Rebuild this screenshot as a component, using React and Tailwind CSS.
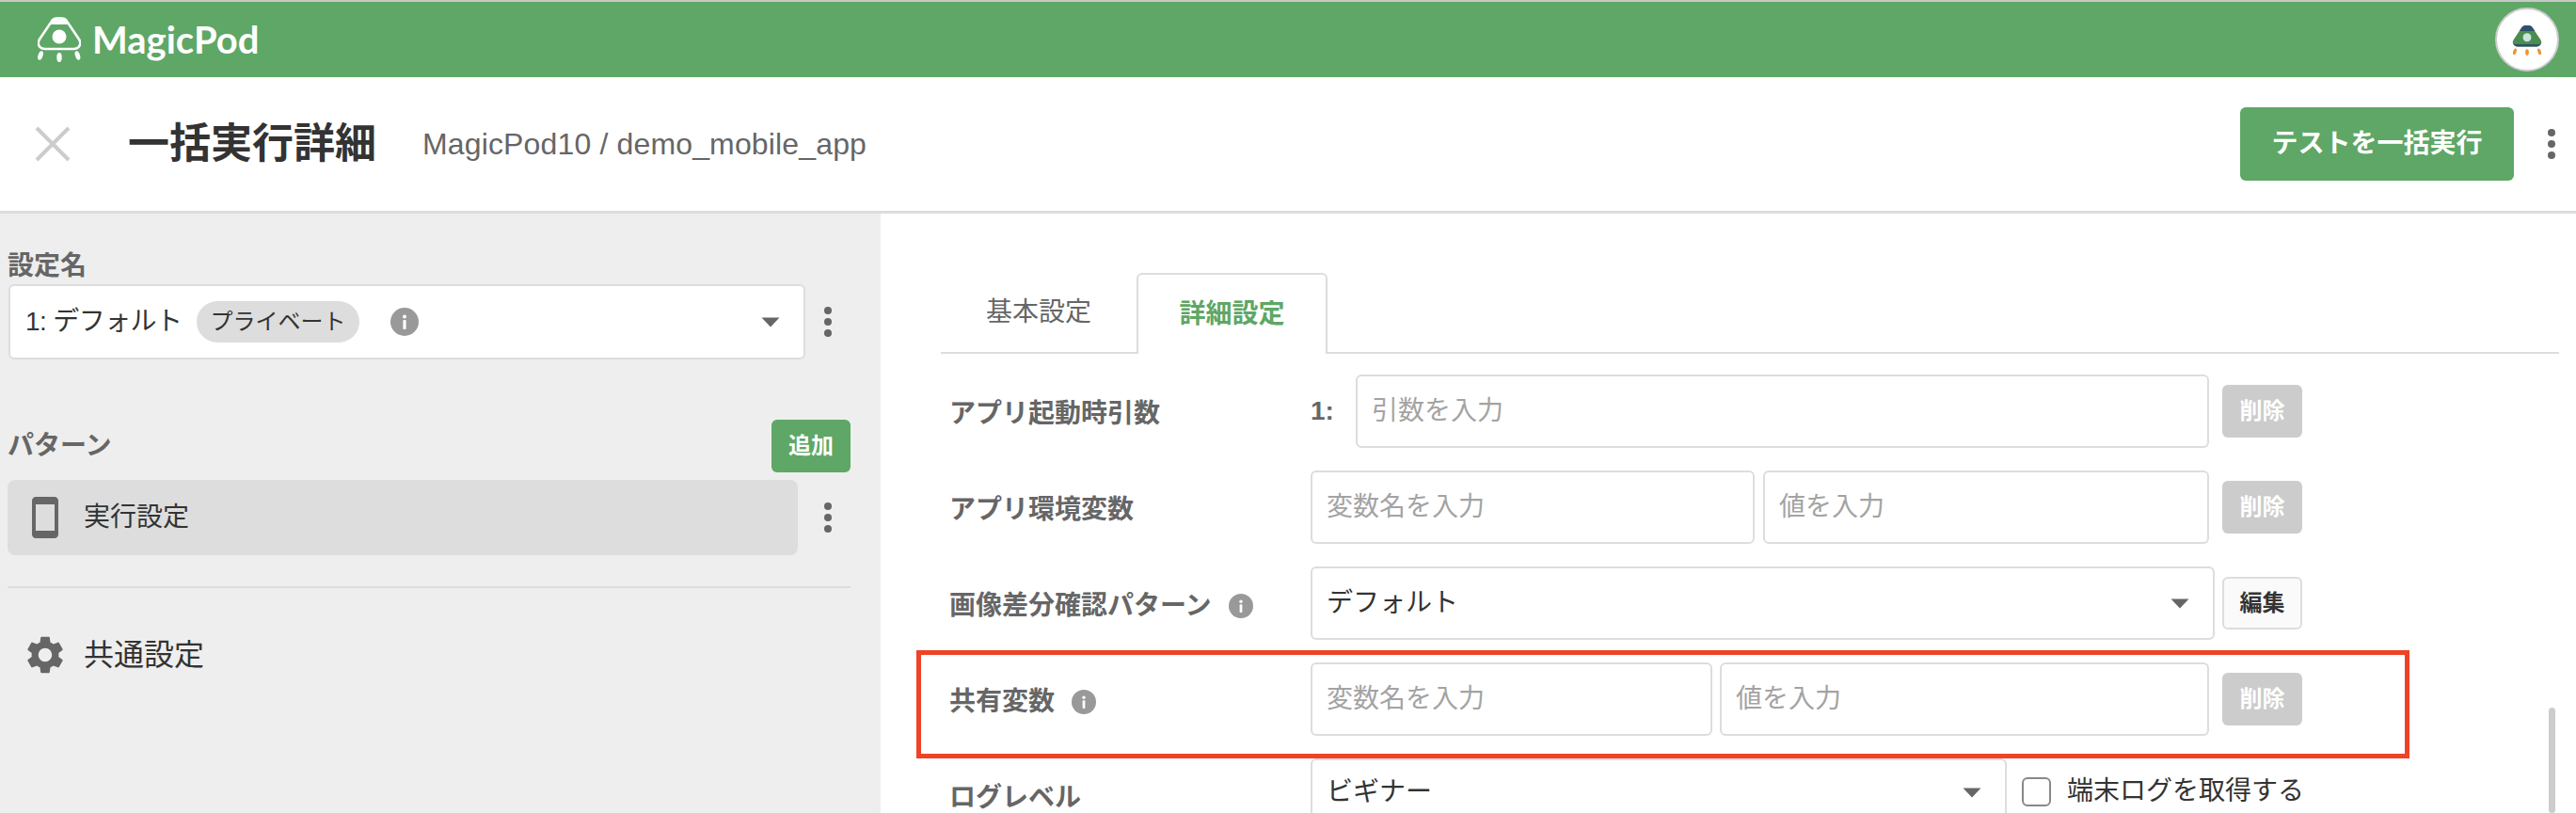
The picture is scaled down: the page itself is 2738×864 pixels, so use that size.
import React from "react";
import { MdSettings, MdSmartphone } from "react-icons/md";

const Info = ({ size = 30, className = "" }) => (
  <svg width={size} height={size} viewBox="0 0 30 30" className={className}>
    <circle cx="15" cy="15" r="15" fill="#999999" />
    <circle cx="15" cy="9.5" r="2" fill="#fff" />
    <rect x="13.4" y="13" width="3.2" height="10" rx="1" fill="#fff" />
  </svg>
);

const Kebab = ({ className = "" }) => (
  <div className={"flex flex-col gap-[4px] w-[8px] " + className}>
    <span className="block w-[8px] h-[8px] rounded-full bg-[#666666]" />
    <span className="block w-[8px] h-[8px] rounded-full bg-[#666666]" />
    <span className="block w-[8px] h-[8px] rounded-full bg-[#666666]" />
  </div>
);

const Arrow = ({ className = "" }) => (
  <svg width="20" height="11" viewBox="0 0 20 11" className={className}>
    <path d="M0.5 0.5H19.5L10 10.5Z" fill="#666666" />
  </svg>
);

const TextInput = ({ placeholder, className = "" }) => (
  <input
    placeholder={placeholder}
    className={
      "h-[78px] min-w-0 rounded-[6px] border-2 border-[#dddddd] bg-white px-[15px] text-[28px] text-[#333333] placeholder:text-[#a3a3a3] outline-none " +
      className
    }
  />
);

const Delete = () => (
  <button className="ml-[14px] h-[56px] w-[85px] rounded-[6px] bg-[#cccccc] text-[24px] font-bold text-white">
    削除
  </button>
);

const Label = ({ children, info }) => (
  <div className="flex w-[393px] shrink-0 items-center pl-[9px] pt-[5px] text-[28px] font-bold text-[#666666]">
    <span>{children}</span>
    {info && <Info size={26} className="ml-[18px]" />}
  </div>
);

const Logo = () => (
  <svg width="46" height="48" viewBox="0 0 46 48" fill="none">
    <path
      d="M16 3C18 .8 28 .8 30 3L43.5 23C47.5 28.5 44 34 38 34H8C2 34-1.500 28.500 2.500 23Z"
      stroke="#fff"
      strokeWidth="2.600"
    />
    <path d="M16.500 2.500C19 1 27 1 29.500 2.500L33.500 8H12.500Z" fill="#fff" />
    <circle cx="23" cy="21" r="7.500" fill="#fff" />
    <ellipse cx="3" cy="41" rx="2.500" ry="5" transform="rotate(18 3 41)" fill="#fff" />
    <ellipse cx="23" cy="43" rx="2.700" ry="5" fill="#fff" />
    <ellipse cx="42.500" cy="41" rx="2.500" ry="5" transform="rotate(-18 42.500 41)" fill="#fff" />
  </svg>
);

const AvatarMark = () => (
  <svg width="32" height="33" viewBox="0 0 46 48">
    <path d="M16 3C18 .8 28 .8 30 3L43.500 23C47.500 28.500 44 34 38 34H8C2 34-1.500 28.500 2.500 23Z" fill="#4c8c4f" />
    <path d="M16 3C18 .8 28 .8 30 3L35 10H11Z" fill="#2f5169" />
    <path d="M2 30.500C3.500 33 5.500 34 8 34H38C40.500 34 42.500 33 44 30.500Z" fill="#2f5169" />
    <circle cx="23" cy="20" r="6.500" fill="#c7e6dc" />
    <ellipse cx="4" cy="42" rx="2.500" ry="5" transform="rotate(18 4 42)" fill="#ef9433" />
    <ellipse cx="23" cy="43" rx="2.700" ry="5" fill="#ef9433" />
    <ellipse cx="42" cy="42" rx="2.500" ry="5" transform="rotate(-18 42 42)" fill="#ef9433" />
  </svg>
);

export default function App() {
  return (
    <div className="relative flex h-[864px] w-[2738px] flex-col overflow-hidden bg-white font-['Liberation_Sans','Noto_Sans_CJK_JP',sans-serif] text-[#333333]">
      <header className="flex h-[82px] shrink-0 items-center justify-between border-t-2 border-[#c8c8c8] bg-[#5ea766] pl-[40px] pr-[18px]">
        <div className="flex items-center">
          <Logo />
          <span className="ml-[12px] font-['Lato',sans-serif] text-[40px] font-bold leading-none text-white">
            MagicPod
          </span>
        </div>
        <div className="flex h-[68px] w-[68px] items-center justify-center rounded-full border-2 border-[#cccccc] bg-white">
          <AvatarMark />
        </div>
      </header>

      <div className="flex h-[145px] shrink-0 items-center border-b-[3px] border-[#dddddd] pl-[37px] pr-[22px]">
        <svg width="38" height="38" viewBox="0 0 38 38" className="shrink-0">
          <path d="M2 2L36 36M36 2L2 36" stroke="#cccccc" strokeWidth="4" />
        </svg>
        <h1 className="ml-[61px] text-[44px] font-bold leading-none text-[#333333]">一括実行詳細</h1>
        <span className="ml-[49px] text-[32px] tracking-[0.15px] text-[#666666]">MagicPod10 / demo_mobile_app</span>
        <button className="ml-auto h-[78px] w-[291px] rounded-[6px] bg-[#5ea766] text-[28px] font-bold text-white">
          テストを一括実行
        </button>
        <Kebab className="ml-[36px]" />
      </div>

      <div className="flex min-h-0 flex-1">
        <aside className="w-[936px] shrink-0 bg-[#eeeeee] pl-[8px] pt-[37px]">
          <div className="text-[28px] font-bold leading-[38px] text-[#666666]">設定名</div>
          <div className="flex items-center">
            <div className="ml-[1px] flex h-[80px] w-[847px] items-center rounded-[6px] border-2 border-[#dddddd] bg-white pl-[16px] pr-[25px]">
              <span className="w-[168px] shrink-0 whitespace-nowrap text-[28px] tracking-[-0.6px] text-[#333333]">1: デフォルト</span>
              <span className="ml-[14px] flex h-[44px] w-[173px] items-center justify-center rounded-full bg-[#dddddd] text-[24px] text-[#333333]">
                プライベート
              </span>
              <Info className="ml-[33px]" />
              <Arrow className="ml-auto" />
            </div>
            <Kebab className="ml-[20px]" />
          </div>

          <div className="mt-[64px] flex h-[56px] w-[896px] items-center justify-between">
            <span className="text-[28px] font-bold text-[#666666]">パターン</span>
            <button className="h-[56px] w-[84px] rounded-[6px] bg-[#5ea766] text-[24px] font-bold text-white">追加</button>
          </div>
          <div className="mt-[8px] flex items-center">
            <div className="flex h-[80px] w-[840px] items-center rounded-[8px] bg-[#dddddd] pl-[16px]">
              <MdSmartphone className="shrink-0 text-[#666666]" size={48} />
              <span className="ml-[17px] text-[28px] text-[#333333]">実行設定</span>
            </div>
            <Kebab className="ml-[28px]" />
          </div>
          <div className="mt-[33px] h-[2px] w-[896px] bg-[#dddddd]" />
          <div className="mt-[46px] flex h-[50px] items-center pl-[16px]">
            <MdSettings className="shrink-0 text-[#666666]" size={48} />
            <span className="ml-[17px] text-[32px] text-[#333333]">共通設定</span>
          </div>
        </aside>

        <main className="min-w-0 flex-1 pl-[64px] pr-[18px] pt-[63px]">
          <div className="flex h-[86px] border-b-2 border-[#dddddd]">
            <div className="flex h-[84px] w-[208px] items-center justify-center text-[28px] text-[#666666]">基本設定</div>
            <div className="flex h-[86px] w-[203px] items-center justify-center rounded-t-[6px] border-2 border-b-0 border-[#dddddd] bg-white text-[28px] font-bold text-[#5ea766]">
              詳細設定
            </div>
          </div>

          <div className="mt-[22px] flex flex-col gap-[24px]">
            <div className="flex h-[78px] items-center">
              <Label>アプリ起動時引数</Label>
              <div className="flex w-[955px] items-center">
                <span className="w-[48px] shrink-0 text-[28px] font-bold text-[#666666]">1:</span>
                <TextInput placeholder="引数を入力" className="flex-1" />
              </div>
              <Delete />
            </div>

            <div className="flex h-[78px] items-center">
              <Label>アプリ環境変数</Label>
              <div className="flex w-[955px] items-center gap-[9px]">
                <TextInput placeholder="変数名を入力" className="w-[472px]" />
                <TextInput placeholder="値を入力" className="flex-1" />
              </div>
              <Delete />
            </div>

            <div className="flex h-[78px] items-center">
              <Label info>画像差分確認パターン</Label>
              <div className="flex h-[78px] w-[961px] items-center rounded-[6px] border-2 border-[#dddddd] bg-white pl-[15px] pr-[25px] text-[28px] text-[#333333]">
                デフォルト
                <Arrow className="ml-auto" />
              </div>
              <button className="ml-[8px] h-[56px] w-[85px] rounded-[6px] border-2 border-[#dddddd] bg-[#fafafa] text-[24px] font-bold text-[#333333]">
                編集
              </button>
            </div>

            <div className="flex h-[78px] items-center">
              <Label info>共有変数</Label>
              <div className="flex w-[955px] items-center gap-[8px]">
                <TextInput placeholder="変数名を入力" className="w-[427px]" />
                <TextInput placeholder="値を入力" className="flex-1" />
              </div>
              <Delete />
            </div>

            <div className="flex h-[78px] items-center">
              <Label>ログレベル</Label>
              <div className="flex h-[78px] w-[740px] items-center rounded-[6px] border-2 border-[#dddddd] bg-white pb-[6px] pl-[15px] pr-[25px] text-[28px] text-[#333333]">
                ビギナー
                <Arrow className="ml-auto" />
              </div>
              <span className="mb-[8px] ml-[16px] h-[31px] w-[31px] rounded-[6px] border-2 border-[#888888] bg-white" />
              <span className="mb-[8px] ml-[17px] text-[28px] text-[#333333]">端末ログを取得する</span>
            </div>
          </div>
        </main>
      </div>

      <div className="absolute left-[974px] top-[691px] h-[115px] w-[1587px] border-[5px] border-[#ee4326]" />
      <div className="absolute left-[2709px] top-[752px] h-[112px] w-[7px] rounded-full bg-[#cccccc]" />
    </div>
  );
}
